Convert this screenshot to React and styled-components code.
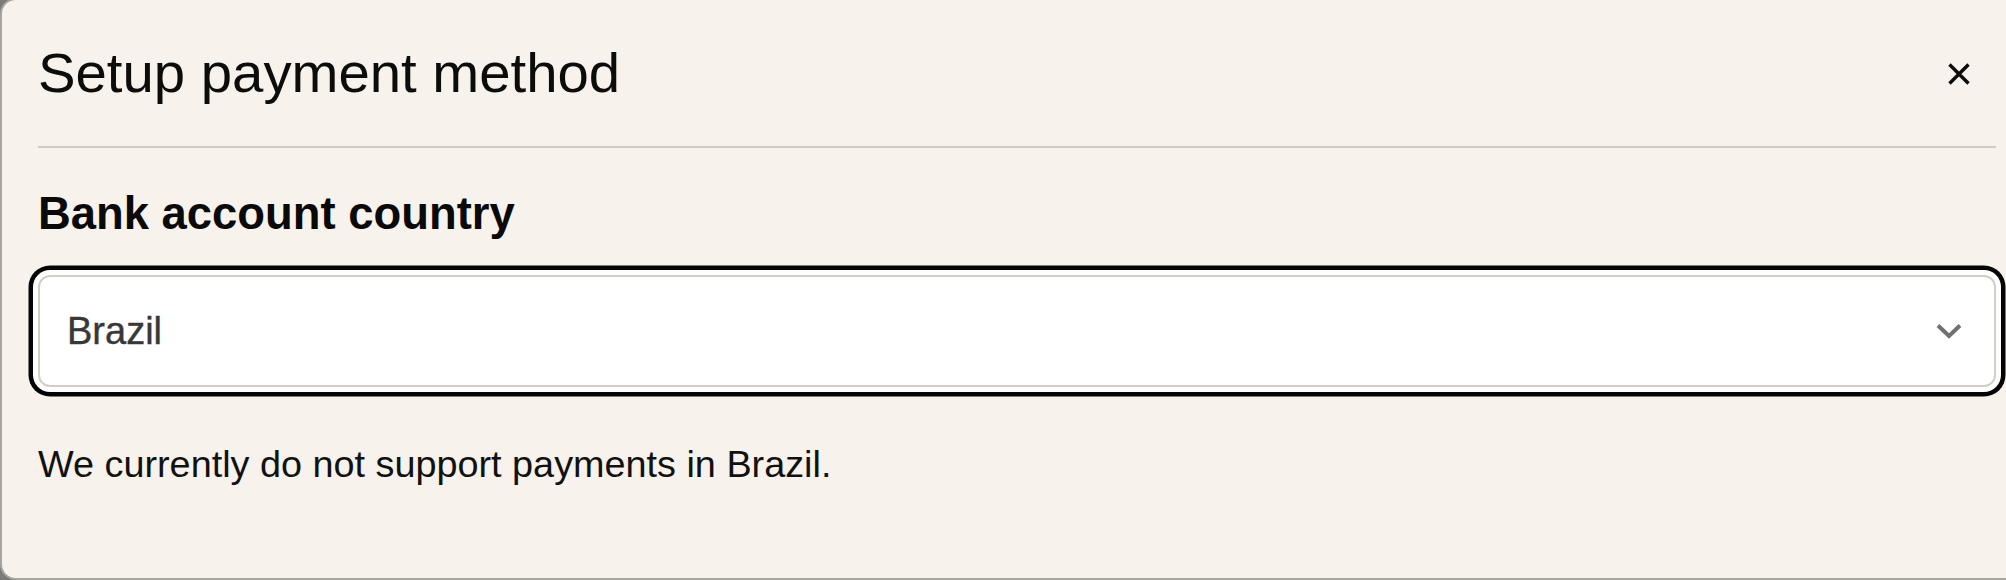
import styled, { createGlobalStyle } from "styled-components";

const GlobalStyle = createGlobalStyle`
  html, body {
    margin: 0;
    padding: 0;
    height: 580px;
    overflow: hidden;
    background: #7c7b79;
    font-family: "Liberation Sans", Arial, Helvetica, sans-serif;
  }
`;

const CloseIcon = () => (
  <svg width="22" height="22" viewBox="0 0 22 22" aria-hidden="true">
    <path
      d="M1.5 1.5 20.5 20.5 M20.5 1.5 1.5 20.5"
      stroke="#0b0b0a"
      strokeWidth="3.4"
      fill="none"
    />
  </svg>
);

const ChevronIcon = () => (
  <svg width="26" height="16" viewBox="0 0 26 16" aria-hidden="true">
    <polyline
      points="2,2.5 13,13 24,2.5"
      stroke="#727170"
      strokeWidth="4"
      fill="none"
    />
  </svg>
);

export default function App() {
  return (
    <>
      <GlobalStyle />
      <Dialog role="dialog" aria-labelledby="dialog-title">
        <Header>
          <Title id="dialog-title">Setup payment method</Title>
          <CloseButton aria-label="Close">
            <CloseIcon />
          </CloseButton>
        </Header>
        <Divider />
        <Label>Bank account country</Label>
        <Select tabIndex={0} role="combobox" aria-expanded="false">
          <SelectValue>Brazil</SelectValue>
          <ChevronIcon />
        </Select>
        <Notice>We currently do not support payments in Brazil.</Notice>
      </Dialog>
    </>
  );
}

const Dialog = styled.section`
  box-sizing: border-box;
  width: 2034px;
  height: 582px;
  margin-top: -2px;
  padding: 41px 36px 0 36px;
  background: #f7f2eb;
  border: 2px solid #a8a49e;
  border-radius: 16px;
  display: flex;
  flex-direction: column;
`;

const Header = styled.header`
  display: flex;
  align-items: center;
  justify-content: space-between;
  height: 64px;
  padding-right: 26px;
`;

const Title = styled.h2`
  margin: 0;
  font-size: 56.3px;
  line-height: 64px;
  font-weight: 400;
  color: #0c0c0a;
`;

const CloseButton = styled.button`
  display: flex;
  align-items: center;
  justify-content: center;
  width: 22px;
  height: 22px;
  padding: 0;
  margin-top: 2px;
  border: none;
  background: none;
  cursor: pointer;
`;

const Divider = styled.hr`
  margin: 41px 0 0 0;
  height: 2px;
  border: none;
  background: #d3cbbf;
`;

const Label = styled.h3`
  margin: 40px 0 0 0;
  font-size: 45.4px;
  line-height: 52px;
  font-weight: 700;
  color: #0a0a0a;
`;

const Select = styled.div`
  box-sizing: border-box;
  margin-top: 35px;
  height: 112px;
  display: flex;
  align-items: center;
  justify-content: space-between;
  padding: 0 32px 0 27px;
  background: #ffffff;
  border: 2px solid #d4cec6;
  border-radius: 12px;
  box-shadow: 0 0 0 5px #ffffff, 0 0 0 9.5px #050505;
  outline: none;
  cursor: pointer;
`;

const SelectValue = styled.span`
  font-size: 38px;
  color: #383838;
  -webkit-text-stroke: 0.4px #383838;
`;

const Notice = styled.p`
  margin: 56px 0 0 0;
  font-size: 37.8px;
  line-height: 43px;
  color: #111110;
`;
